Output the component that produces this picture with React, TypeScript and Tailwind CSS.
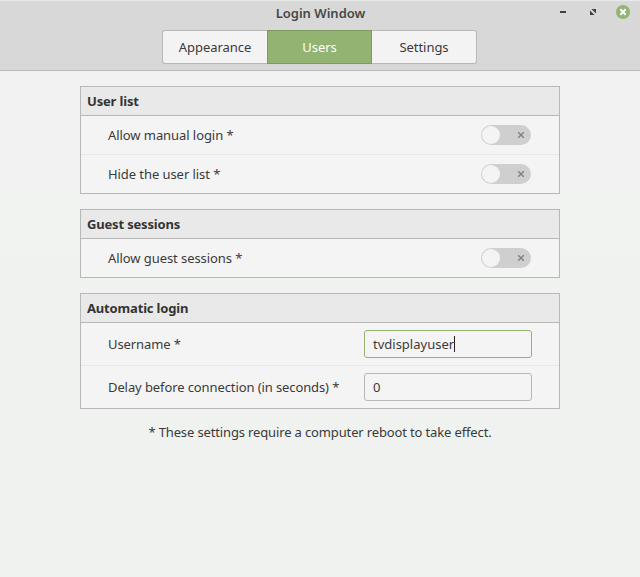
import type { ReactNode } from "react";

function Panel({ title, children }: { title: string; children: ReactNode }) {
  return (
    <section className="w-[480px] border border-[#b8b8b8] bg-[#f4f4f4]">
      <h2 className="flex h-[29px] items-center border-b border-[#b8b8b8] bg-[#e9e9e9] pl-[6px] text-[13px] font-bold text-[#343434]">
        <span className="tracking-[-0.17px]">{title}</span>
      </h2>
      <div className="divide-y divide-[#e8e8e8]">{children}</div>
    </section>
  );
}

function SwitchRow({ label }: { label: string }) {
  return (
    <div className="flex h-[38px] items-center justify-between pr-[28px] pl-[27px] [&:not(:last-child)]:h-[39px]">
      <span className="tracking-[-0.07px]">{label}</span>
      <Switch />
    </div>
  );
}

function Switch() {
  return (
    <button
      role="switch"
      aria-checked="false"
      className="flex h-[20px] w-[50px] items-center justify-between rounded-full bg-[#cfcfcf] pr-[7px] pl-[1px]"
    >
      <span className="h-[18px] w-[18px] rounded-full bg-[#f4f4f4]" />
      <svg width="6" height="6" viewBox="0 0 6 6" stroke="#808080" strokeWidth="1.4">
        <path d="M0 0L6 6M6 0L0 6" />
      </svg>
    </button>
  );
}

function FieldRow({ label, children }: { label: string; children: ReactNode }) {
  return (
    <div className="flex h-[42px] items-center justify-between pr-[27px] pl-[27px] [&:not(:last-child)]:h-[43px]">
      <span className="tracking-[-0.1px]">{label}</span>
      {children}
    </div>
  );
}

export default function App() {
  return (
    <div className="h-[577px] w-[640px] overflow-hidden bg-linear-to-b from-[#f2f2f2] to-[#f0f2f0] to-60% font-['Noto_Sans',sans-serif] text-[13px] leading-[18px] tracking-[-0.15px] text-[#3a3a3a]">
      <header className="h-[71px] border-t border-b border-t-[#e8e8e8] border-b-[#b8b8b8] bg-[#d8d8d8]">
        <div className="grid h-[29px] grid-cols-[1fr_auto_1fr] pt-[2px]">
          <span />
          <h1 className="pt-[1px] pl-[1px] text-[13px] font-semibold tracking-[0px] text-[#484848]">Login Window</h1>
          <div className="flex items-start justify-end pr-[10px]">
            <svg width="70" height="18" viewBox="560 3 70 18">
              <path d="M560 11h6v2h-6z" fill="#3f3f46" />
              <path d="M591.5 9h4.5v4.5zM590 10.5v4.5h4.5z" fill="#3f3f46" />
              <circle cx="623" cy="12" r="7" fill="#92b372" />
              <path d="M620.3 9.3l5.4 5.4M625.7 9.3l-5.4 5.4" stroke="#fff" strokeWidth="2" />
            </svg>
          </div>
        </div>
        <nav className="ml-[162px] flex h-[34px] w-[315px] tracking-[-0.05px]">
          <button className="w-[105px] rounded-l-[3px] border border-r-0 border-[#b8b8b8] bg-[#f3f3f3]">Appearance</button>
          <button className="w-[105px] border border-[#7d9a60] bg-[#92b372] text-white">Users</button>
          <button className="w-[105px] rounded-r-[3px] border border-l-0 border-[#b8b8b8] bg-[#f3f3f3]">Settings</button>
        </nav>
      </header>
      <main className="flex flex-col items-center gap-[15px] pt-[15px]">
        <Panel title="User list">
          <SwitchRow label="Allow manual login *" />
          <SwitchRow label="Hide the user list *" />
        </Panel>
        <Panel title="Guest sessions">
          <SwitchRow label="Allow guest sessions *" />
        </Panel>
        <Panel title="Automatic login">
          <FieldRow label="Username *">
            <div className="flex h-[28px] w-[168px] items-center rounded-[3px] border border-[#92b372] pl-[8px]">
              <span className="tracking-[0px]">tvdisplayuser</span>
              <span className="h-[16px] w-px bg-[#222]" />
            </div>
          </FieldRow>
          <FieldRow label="Delay before connection (in seconds) *">
            <div className="flex h-[28px] w-[168px] items-center rounded-[3px] border border-[#b8b8b8] pl-[8px]">0</div>
          </FieldRow>
        </Panel>
        <p className="-mt-px tracking-[-0.14px]">* These settings require a computer reboot to take effect.</p>
      </main>
    </div>
  );
}
